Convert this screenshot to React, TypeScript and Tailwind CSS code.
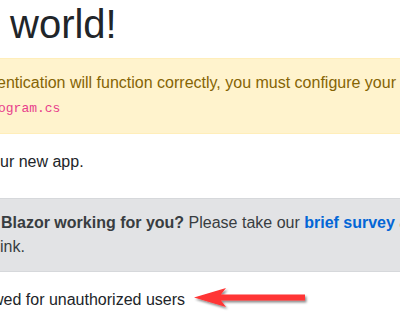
import React from 'react';

const Arrow: React.FC = () => (
  <svg
    className="absolute left-[190px] top-[284px]"
    width="122"
    height="30"
    viewBox="0 0 122 30"
  >
    <defs>
      <filter id="arrowShadow" x="-10%" y="-40%" width="130%" height="200%">
        <feDropShadow dx="1.5" dy="2" stdDeviation="1.2" floodColor="#000" floodOpacity="0.45" />
      </filter>
    </defs>
    <polygon
      points="4,13.5 36,4 31,10.5 115,10.5 115,16.5 31,16.5 36,23"
      fill="#ff3434"
      filter="url(#arrowShadow)"
    />
  </svg>
);

const App: React.FC = () => {
  return (
    <div className="relative w-[400px] h-[311px] overflow-hidden bg-white text-[#212529] text-[16px] leading-6 font-['Liberation_Sans',Arial,sans-serif]">
      {/* heading, left part is off screen */}
      <h1 className="text-[40px] leading-[48px] font-medium pl-[10px] whitespace-nowrap">world!</h1>

      {/* warning alert */}
      <div className="mt-[10px] border-y border-[#ffeeba] bg-[#fff3cd] text-[#856404] py-3 whitespace-nowrap">
        <div className="ml-[-3px]">entication will function correctly, you must configure your</div>
        <div className="ml-[-2px]">
          <code className="text-[13px] text-[#e83e8c] font-['Liberation_Mono','DejaVu_Sans_Mono',monospace]">ogram.cs</code>
        </div>
      </div>

      <p className="mt-4">ur new app.</p>

      {/* survey prompt */}
      <div className="mt-6 border-y border-[#d6d8db] bg-[#e2e3e5] text-[#383d41] py-3 whitespace-nowrap">
        <div className="pl-[1px]">
          <strong className="font-bold">Blazor working for you?</strong> Please take our{' '}
          <a href="#" className="font-bold text-[#0366d6]">brief survey</a> and tell us what you think.
        </div>
        <div>ink.</div>
      </div>

      <p className="mt-4 ml-[-8px] whitespace-nowrap">wed for unauthorized users</p>

      <Arrow />
    </div>
  );
};

export default App;
